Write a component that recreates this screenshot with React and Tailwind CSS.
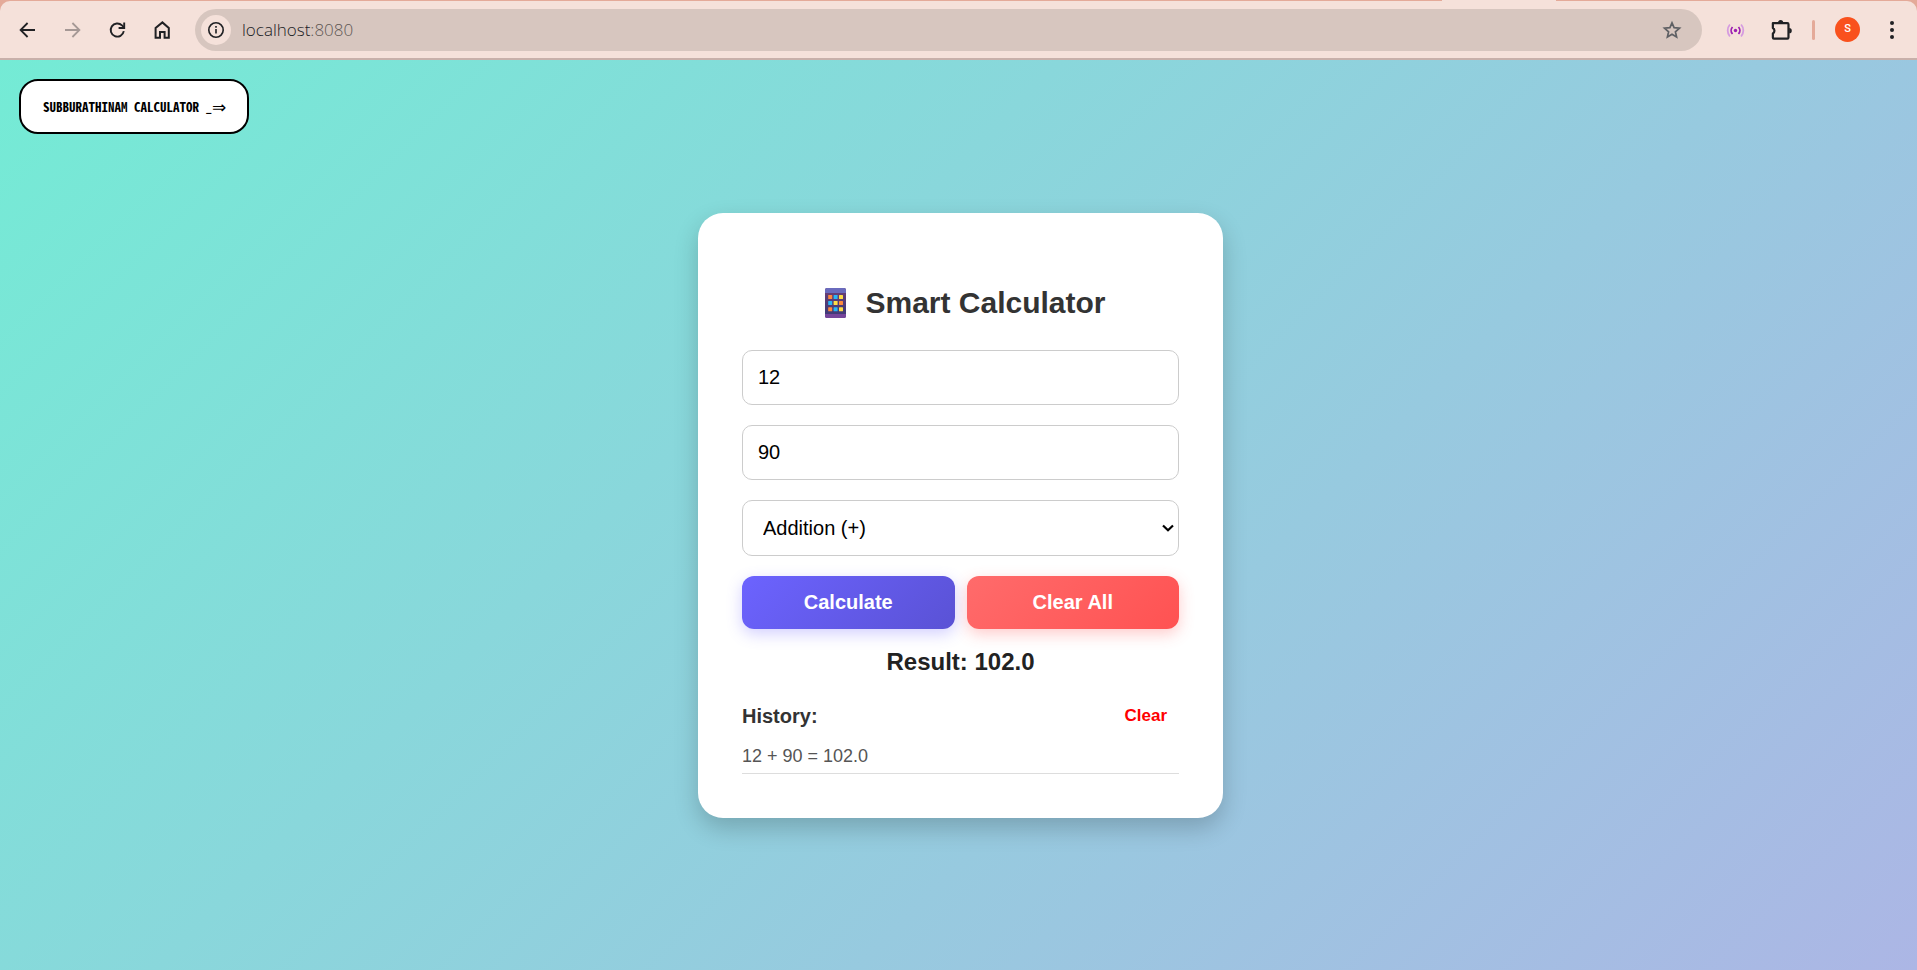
import { useState } from "react";

const OPERATIONS = [
  { value: "+", label: "Addition (+)" },
  { value: "-", label: "Subtraction (-)" },
  { value: "*", label: "Multiplication (*)" },
  { value: "/", label: "Division (/)" },
];

function compute(a, b, op) {
  if (op === "+") return a + b;
  if (op === "-") return a - b;
  if (op === "*") return a * b;
  return a / b;
}

function format(n) {
  return Number.isInteger(n) ? n.toFixed(1) : String(n);
}

function StrokeIcon({ size = 20, width = 2, className = "", children }) {
  return (
    <svg
      width={size}
      height={size}
      viewBox="0 0 20 20"
      fill="none"
      stroke="currentColor"
      strokeWidth={width}
      className={className}
      aria-hidden="true"
    >
      {children}
    </svg>
  );
}

function ToolButton({ label, className = "", children }) {
  return (
    <button
      type="button"
      aria-label={label}
      className={`flex size-[30px] shrink-0 items-center justify-center rounded-full ${className}`}
    >
      {children}
    </button>
  );
}

function BrowserBar() {
  return (
    <header className="shrink-0 bg-[#e4aa99] pt-px">
      <div className="relative flex h-[59px] items-center rounded-t-[10px] border-b-2 border-[#c8b0aa] bg-[#f5e1da] pr-2.5 pl-3 text-[#202124]">
        <span className="absolute -top-px right-[361px] h-px w-[114px] bg-[#f5e1da]" />
        <nav aria-label="Browser" className="flex shrink-0 gap-[15px]">
          <ToolButton label="Back">
            <StrokeIcon width={1.8}>
              <path d="M18 10H4M10.6 3 3.6 10l7 7" />
            </StrokeIcon>
          </ToolButton>
          <ToolButton label="Forward" className="text-[#a59895]">
            <StrokeIcon width={1.8}>
              <path d="M3 10h14M10.4 3l7 7-7 7" />
            </StrokeIcon>
          </ToolButton>
          <ToolButton label="Reload">
            <StrokeIcon width={1.9}>
              <path d="M16.8 11.2A6.6 6.6 0 1 1 15 5.4L17 7.4" />
              <path d="M17.2 2.6V8h-5.6" />
            </StrokeIcon>
          </ToolButton>
          <ToolButton label="Home">
            <StrokeIcon>
              <path d="M3.6 17.8V7.9L10.4 2.4l6.4 5.5v9.9h-4.2v-5.7H8v5.7z" />
            </StrokeIcon>
          </ToolButton>
        </nav>

        <div className="ml-[18px] flex h-[42px] min-w-0 flex-1 items-center rounded-full bg-[#d7c6bf] pr-[15px] pl-1.5">
          <ToolButton label="Site information" className="bg-[#f5e1da]">
            <StrokeIcon size={18} width={1.8}>
              <circle cx="10" cy="10" r="8" />
              <path d="M10 9v5M10 5.6v2" />
            </StrokeIcon>
          </ToolButton>
          <p className="ml-[11px] flex-1 font-['Open_Sans',sans-serif] text-[17px] leading-6 font-light text-[#202124]">
            localhost<span className="text-[#5f5855]">:8080</span>
          </p>
          <ToolButton label="Bookmark this page" className="text-[#5f6064]">
            <StrokeIcon width={1.7}>
              <path d="m10 2.8 2.1 4.9 5.4.5-4.1 3.6 1.2 5.3-4.6-2.8-4.6 2.8 1.2-5.3-4.1-3.6 5.4-.5z" />
            </StrokeIcon>
          </ToolButton>
        </div>

        <div className="ml-[18px] flex shrink-0 items-center">
          <ToolButton label="Live extension" className="text-[#9c1fb1]">
            <StrokeIcon size={20} width={1.8}>
              <circle cx="10.5" cy="10.5" r="1.7" fill="currentColor" stroke="none" />
              <path d="M7.5 7a5.2 5.2 0 0 0 0 7M13.5 7a5.2 5.2 0 0 1 0 7" />
              <path
                d="M4.9 4.5a9.2 9.2 0 0 0 0 12M16.1 4.5a9.2 9.2 0 0 1 0 12"
                stroke="#d59be0"
              />
            </StrokeIcon>
          </ToolButton>
          <ToolButton label="Extensions" className="ml-4">
            <StrokeIcon size={22}>
              <path
                strokeLinejoin="round"
                d="M2.6 3.8h13.2q1 0 1 1v12q0 1-1 1H3.6q-1 0-1-1v-3.6a2.9 2.9 0 0 0 0-5z"
              />
              <path
                fill="currentColor"
                stroke="none"
                d="M7.2 3.4a2.4 2.4 0 0 1 4.8 0zM17.4 8.2a2.4 2.4 0 0 1 0 4.8z"
              />
            </StrokeIcon>
          </ToolButton>
          <span className="ml-4 h-5 w-[3px] rounded-full bg-[#e4aa99]" />
          <button
            type="button"
            aria-label="Profile"
            className="ml-5 flex size-[25px] items-center justify-center rounded-full bg-[#f9511d] font-['Roboto',sans-serif] text-[11px] font-medium text-white"
          >
            S
          </button>
          <ToolButton label="Menu" className="ml-[17px]">
            <StrokeIcon size={20}>
              <g fill="currentColor" stroke="none">
                <circle cx="10" cy="3" r="2" />
                <circle cx="10" cy="10" r="2" />
                <circle cx="10" cy="17" r="2" />
              </g>
            </StrokeIcon>
          </ToolButton>
        </div>
      </div>
    </header>
  );
}

const KEYS = [
  ["#ff8a3c", "#29b6f6", "#ffdd45"],
  ["#29b6f6", "#ffdd45", "#ff8a3c"],
  ["#ff8a3c", "#29b6f6", "#ffdd45"],
];

function CalculatorIcon() {
  return (
    <svg width="42" height="30" viewBox="0 0 42 30" aria-hidden="true">
      <defs>
        <linearGradient id="body" x1="0" y1="0" x2="0" y2="1">
          <stop offset="0" stopColor="#6f3f75" />
          <stop offset="0.75" stopColor="#433b78" />
          <stop offset="1" stopColor="#433b78" />
        </linearGradient>
      </defs>
      <rect x="10" y="0" width="21" height="30" rx="2" fill="url(#body)" />
      <path d="M12 0h17a2 2 0 0 1 2 2v3H10V2a2 2 0 0 1 2-2z" fill="#6a6bbd" />
      <path d="M10 26h21v2a2 2 0 0 1-2 2H12a2 2 0 0 1-2-2z" fill="#75459b" />
      {KEYS.map((row, r) =>
        row.map((fill, c) => (
          <rect
            key={`${r}-${c}`}
            x={13.2 + c * 5.4}
            y={7 + r * 6.1}
            width="4"
            height="4"
            rx="0.5"
            fill={fill}
          />
        ))
      )}
    </svg>
  );
}

const FIELD =
  "block w-full rounded-[10px] border border-[#cccccc] bg-white text-[20px] text-black outline-none";
const ACTION =
  "h-[53px] flex-1 rounded-xl text-[20px] font-bold text-white";

export default function App() {
  const [first, setFirst] = useState("12");
  const [second, setSecond] = useState("90");
  const [op, setOp] = useState("+");
  const [result, setResult] = useState("102.0");
  const [history, setHistory] = useState(["12 + 90 = 102.0"]);

  const calculate = () => {
    const value = format(compute(Number(first), Number(second), op));
    setResult(value);
    setHistory([...history, `${first} ${op} ${second} = ${value}`]);
  };

  const clearAll = () => {
    setFirst("");
    setSecond("");
    setResult("");
  };

  return (
    <div className="flex min-h-screen flex-col font-['Liberation_Sans',Arial,sans-serif]">
      <BrowserBar />
      <main className="relative flex flex-1 items-center justify-center bg-[linear-gradient(135deg,#74ebd5,#acb6e5)] pl-1">
        <button
          type="button"
          className="absolute top-[19px] left-[19px] flex h-[55px] items-center rounded-[19px] border-2 border-black bg-white pr-[21px] pl-[22px] font-['Noto_Sans_Mono_CJK_SC','Liberation_Mono',monospace] text-[13px] font-bold whitespace-nowrap text-black"
        >
          SUBBURATHINAM CALCULATOR _
          <span className="font-['DejaVu_Sans',sans-serif] text-[17px] leading-4 font-normal">⇒</span>
        </button>

        <section className="w-[525px] rounded-[25px] bg-white p-11 shadow-[0_10px_25px_rgba(0,0,0,0.2)]">
          <h1 className="mt-7 mb-[29px] flex items-center justify-center gap-2 text-[30px] leading-9 font-bold text-[#333333]">
            <CalculatorIcon />
            Smart Calculator
          </h1>

          <div className="flex flex-col gap-5">
            <input
              type="text"
              inputMode="decimal"
              aria-label="First number"
              value={first}
              onChange={(e) => setFirst(e.target.value)}
              className={`${FIELD} h-[55px] px-[15px]`}
            />
            <input
              type="text"
              inputMode="decimal"
              aria-label="Second number"
              value={second}
              onChange={(e) => setSecond(e.target.value)}
              className={`${FIELD} h-[55px] px-[15px]`}
            />
            <div className="relative">
              <select
                aria-label="Operation"
                value={op}
                onChange={(e) => setOp(e.target.value)}
                className={`${FIELD} h-14 appearance-none px-5`}
              >
                {OPERATIONS.map((o) => (
                  <option key={o.value} value={o.value}>
                    {o.label}
                  </option>
                ))}
              </select>
              <svg
                width="12"
                height="8"
                viewBox="0 0 12 8"
                fill="none"
                stroke="#000"
                strokeWidth="2.2"
                className="pointer-events-none absolute top-1/2 right-[5px] -translate-y-1/2"
                aria-hidden="true"
              >
                <path d="M1 1.5 6 6.3l5-4.8" />
              </svg>
            </div>
            <div className="flex gap-3">
              <button
                type="button"
                onClick={calculate}
                className={`${ACTION} bg-[linear-gradient(135deg,#6c63ff,#5a52d5)] shadow-[0_5px_15px_rgba(108,99,255,0.3)]`}
              >
                Calculate
              </button>
              <button
                type="button"
                onClick={clearAll}
                className={`${ACTION} bg-[linear-gradient(135deg,#ff6b6b,#ff5252)] shadow-[0_5px_15px_rgba(255,82,82,0.3)]`}
              >
                Clear All
              </button>
            </div>
          </div>

          <p className="mt-[19px] text-center text-[24px] leading-7 font-bold text-[#222222]">
            Result: {result}
          </p>

          <div className="mt-7 flex items-center justify-between">
            <h2 className="text-[20px] leading-6 font-bold text-[#333333]">History:</h2>
            <button
              type="button"
              onClick={() => setHistory([])}
              className="px-3 text-[17px] leading-6 font-bold text-[#ff0000]"
            >
              Clear
            </button>
          </div>
          <ul className="mt-4">
            {history.map((entry, i) => (
              <li
                key={i}
                className="border-b border-[#dddddd] pb-[5px] text-[18px] leading-6 text-[#555555]"
              >
                {entry}
              </li>
            ))}
          </ul>
        </section>
      </main>
    </div>
  );
}
